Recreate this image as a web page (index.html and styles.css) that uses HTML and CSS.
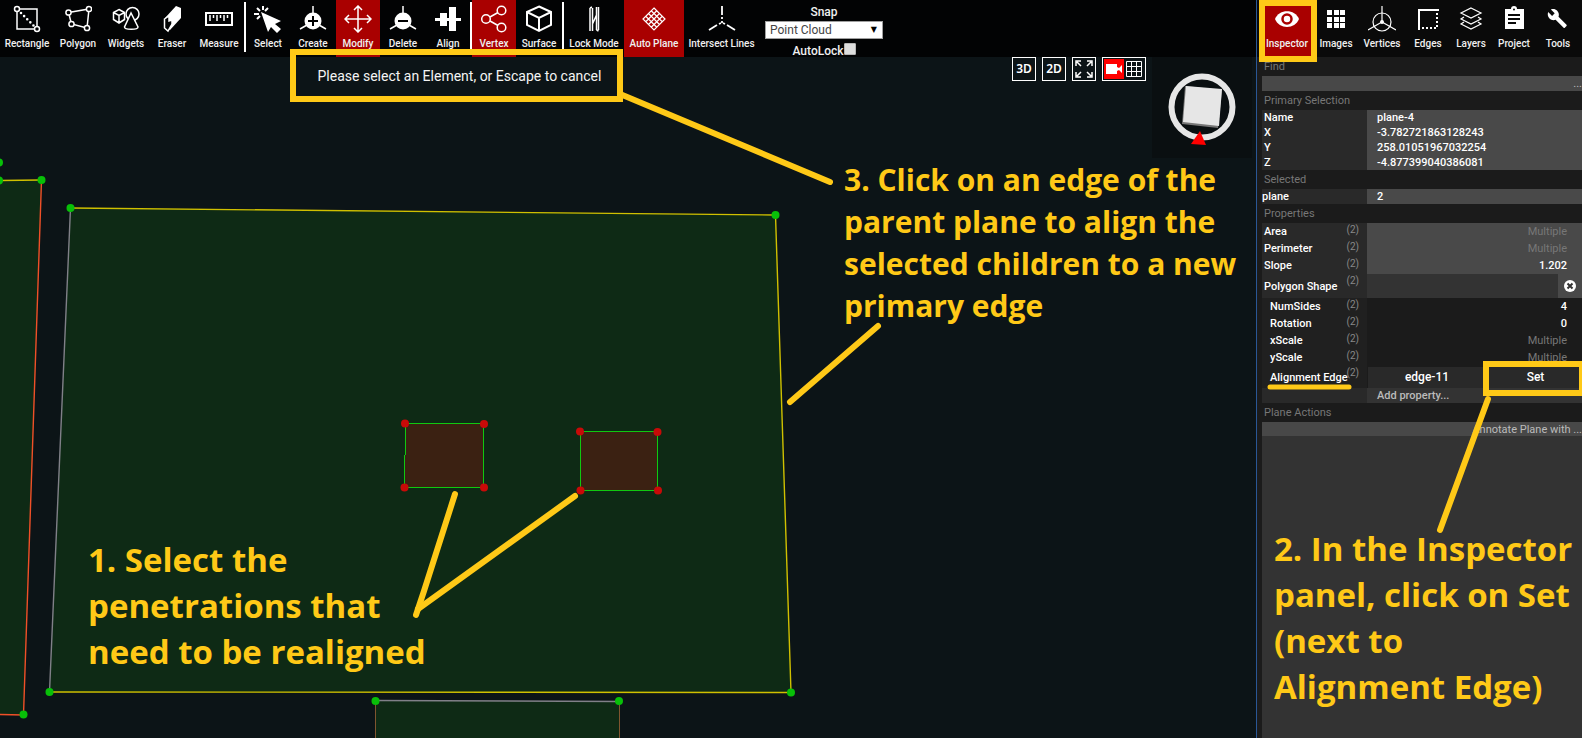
FILE: index.html
```html
<!DOCTYPE html>
<html lang="en">
<head>
<meta charset="utf-8">
<title>Plane editor</title>
<link rel="stylesheet" href="styles.css">
</head>
<body>
<div class="app">
  <main class="workspace">
    <header class="toolbar">
      <button class="tool tool-xl"><svg class="icon" viewBox="0 0 28 28"><path d="M4 4h20v20H4z"/><path d="M8 8l13 13" stroke-width="2.6" stroke-dasharray="0 4.4" stroke-linecap="round"/><circle class="solid-bg" cx="4" cy="4" r="2.5"/><circle class="solid-bg" cx="24" cy="24" r="2.5"/></svg><span>Rectangle</span></button>
      <button class="tool tool-lg"><svg class="icon" viewBox="0 0 28 28"><path d="M4.500 7.500L25 4L23 23L7.500 19z"/><circle class="solid-bg" cx="4.500" cy="7.500" r="2.600"/><circle class="solid-bg" cx="25" cy="4" r="2.600"/><circle class="solid-bg" cx="23" cy="23" r="2.600"/><circle class="solid-bg" cx="7.500" cy="19" r="2.600"/></svg><span>Polygon</span></button>
      <button class="tool tool-lg"><svg class="icon" viewBox="0 0 28 28"><circle cx="20.500" cy="9" r="6.500"/><path d="M7 4.500l5.500 3v7L7 18l-5.500-3.500v-7zM1.500 7.500L7 10.500l5.500-3M7 10.500V18"/><path class="solid-bg" d="M19 8l-6.500 14c0 3 13.500 3 13.500 0z"/></svg><span>Widgets</span></button>
      <button class="tool"><svg class="icon" viewBox="0 0 28 28"><path class="fill" d="M18 1l5 2v10L12 25l-5-4v-8z"/><path class="solid-bg" d="M6.500 14l4.500-3v5l3-1v4l-4 7-3.500-3z"/></svg><span>Eraser</span></button>
      <button class="tool tool-measure"><svg class="icon" viewBox="0 0 28 28"><path d="M1 8h26v12H1z" stroke-width="2"/><path d="M5 10v6M8.500 10v3M12 10v6M15.500 10v3M19 10v6M22.500 10v3"/></svg><span>Measure</span></button>
      <i class="divider"></i>
      <button class="tool"><svg class="icon" viewBox="0 0 28 28"><path class="fill" d="M7 7l20 9-6 3 6 5-4 4-6-6-3 5z"/><path d="M9 1v4M3 3l3 3M0 9h5M3 14l3-3M14 3l-3 3" stroke-width="2"/></svg><span>Select</span></button>
      <button class="tool tool-md"><svg class="icon" viewBox="0 0 28 28"><path d="M14 1v7M1 24l7-4M27 24l-7-4"/><circle class="fill" cx="14" cy="16" r="8.500"/><path class="dark" d="M9 16h10M14 11v10"/></svg><span>Create</span></button>
      <button class="tool active"><svg class="icon" viewBox="0 0 28 28"><path d="M14 2v24M2 14h24M10 5l4-4 4 4M10 23l4 4 4-4M5 10l-4 4 4 4M23 10l4 4-4 4"/></svg><span>Modify</span></button>
      <button class="tool tool-md"><svg class="icon" viewBox="0 0 28 28"><path d="M14 1v7M1 24l7-4M27 24l-7-4"/><circle class="fill" cx="14" cy="16" r="8.500"/><path class="dark" d="M9 16h10"/></svg><span>Delete</span></button>
      <button class="tool"><svg class="icon" viewBox="0 0 28 28"><path class="fill" d="M1 13h26v3H1zM6 8h7v13H6zM15 2h7v24h-7z"/></svg><span>Align</span></button>
      <i class="divider"></i>
      <button class="tool active"><svg class="icon" viewBox="0 0 28 28"><circle cx="6" cy="14" r="4.300"/><circle cx="21.500" cy="5.500" r="4.300"/><circle cx="21.500" cy="22.500" r="4.300"/><path d="M10 12l8-4.500M10 16l8 4.500"/></svg><span>Vertex</span></button>
      <button class="tool tool-md"><svg class="icon" viewBox="0 0 28 28"><path d="M14 1.500L26 7v13l-12 6L2 20V7zM2 7l12 6 12-6M14 13v13" stroke-width="2"/></svg><span>Surface</span></button>
      <i class="divider"></i>
      <button class="tool tool-wide"><svg class="icon" viewBox="0 0 28 28"><path d="M10 26V3M12.500 26V3M10 3l2-1M16.500 25V2M18.500 25V2M12.500 19l4-9M16.500 25l2 1"/></svg><span>Lock Mode</span></button>
      <button class="tool tool-wide active"><svg class="icon" viewBox="0 0 28 28"><path d="M14 3l11 11-11 11L3 14zM16.750 5.750l-11 11M19.500 8.500l-11 11M22.250 11.250l-11 11M11.250 5.750l11 11M8.500 8.500l11 11M5.750 11.250l11 11" stroke-width="1.200"/></svg><span>Auto Plane</span></button>
      <button class="tool tool-wider"><svg class="icon" viewBox="0 0 28 28"><path d="M14 1v9M14 12v2M1 25l8-5M27 25l-8-5M11 19l2-1M17 19l-2-1M14 16v2" stroke-width="1.800"/></svg><span>Intersect Lines</span></button>
      <div class="snap">
        <label for="snap-mode">Snap</label>
        <div class="snap-select"><select id="snap-mode"><option>Point Cloud</option></select><span class="caret">▼</span></div>
        <div class="snap-lock"><label for="auto-lock">AutoLock</label><input type="checkbox" id="auto-lock"></div>
      </div>
    </header>

    <section class="viewport">
      <svg class="scene">
        <path class="plane" d="M0 123.500L41.500 123L23.500 657.500L0 657z"/>
        <path class="plane" d="M70.500 151L775.500 158L791 635.500L49.500 635z"/>
        <path class="plane" d="M375.500 644H619.500V760H375.500z"/>
        <g class="edges">
          <path class="edge-yellow" d="M0 123.500L41.500 123M70.500 151L775.500 158L791 635.500L49.500 635"/>
          <path class="edge-orange" d="M41.500 123L23.500 658L0 657.500"/>
          <path class="edge-grey" d="M70.500 151L49.500 635M375.500 643.500L619.500 644.500"/>
          <path class="edge-brown" d="M375.500 644V760M619.500 644V760"/>
        </g>
        <path class="opening" d="M405.500 366.500H483.500V430.500H404.500z"/>
        <path class="opening" d="M580.500 374.500H657.500V433.500H580.500z"/>
        <g class="vertex">
          <circle cx="-1" cy="105.500" r="4"/><circle cx="-1" cy="123.500" r="4"/><circle cx="41.500" cy="123" r="4"/><circle cx="23.500" cy="657.500" r="4"/>
          <circle cx="70.500" cy="151" r="4"/><circle cx="775.500" cy="158" r="4"/><circle cx="791" cy="635.500" r="4"/><circle cx="49.500" cy="635" r="4"/>
          <circle cx="375.500" cy="644" r="4"/><circle cx="619" cy="644" r="4"/>
        </g>
        <g class="vertex-selected">
          <circle cx="405" cy="366.500" r="4"/><circle cx="484" cy="367" r="4"/><circle cx="484" cy="430.500" r="4"/><circle cx="404.500" cy="430.500" r="4"/>
          <circle cx="580" cy="374.500" r="4"/><circle cx="657.500" cy="375" r="4"/><circle cx="658" cy="433.500" r="4"/><circle cx="580.500" cy="433.500" r="4"/>
        </g>
        <g class="marks">
          <path d="M455 437L424 534L416 558"/><path d="M575 439L418 552"/><path d="M620 37L830 125"/><path d="M878 269L790 345"/>
        </g>
      </svg>
      <p class="message">Please select an Element, or Escape to cancel</p>
      <div class="view-tools">
        <button class="view-btn">3D</button>
        <button class="view-btn">2D</button>
        <button class="view-btn" aria-label="Fit view"><svg viewBox="0 0 22 22"><path d="M8 8L4 4M3 8V3h5M14 8l4-4M14 3h5v5M8 14l-4 4M3 14v5h5M14 14l4 4M19 14v5h-5"/></svg></button>
        <button class="view-btn view-pair" aria-label="Camera and grid"><svg class="camera" viewBox="0 0 20 20"><path class="fill" d="M2 5h11v3l2 1 3-3v8l-3-3-2 1v3H2z"/></svg><svg class="grid" viewBox="0 0 20 20"><path d="M2.500 2.500h15v15h-15zM2.500 7.500h15M2.500 12.500h15M7.500 2.500v15M12.500 2.500v15"/></svg></button>
        <svg class="compass" viewBox="0 0 100 101"><circle cx="50" cy="50" r="30.500"/><path class="cube-side" d="M33 29l-3 38 36 4 4-38z"/><path class="cube" d="M34 29l36 3-3 37-36-4z"/><path class="north" d="M48 74l-9 13 15 1z"/></svg>
      </div>
      <p class="note note-1">1. Select the<br>penetrations that<br>need to be realigned</p>
      <p class="note note-3">3. Click on an edge of the<br>parent plane to align the<br>selected children to a new<br>primary edge</p>
    </section>
  </main>

  <aside class="panel">
    <nav class="tabs">
      <button class="tool tool-xl active"><svg class="icon" viewBox="0 0 28 28"><path class="fill" d="M2 14C6 3.500 22 3.500 26 14C22 24.500 6 24.500 2 14z"/><circle class="eye-ring" cx="14" cy="14" r="4.500"/></svg><span>Inspector</span></button>
      <button class="tool"><svg class="icon" viewBox="0 0 28 28"><path class="fill" d="M5 5h5v5H5zM12 5h5v5h-5zM18 5h5v5h-5zM5 12h5v5H5zM12 12h5v5h-5zM18 12h5v5h-5zM5 18h5v5H5zM12 18h5v5h-5zM18 18h5v5h-5z"/></svg><span>Images</span></button>
      <button class="tool tool-lg"><svg class="icon" viewBox="0 0 28 28"><circle cx="14" cy="17" r="9" stroke-width="1.200"/><path d="M14 1v16L0 25M14 17l14 8" stroke-width="1.200"/><circle class="fill" cx="14" cy="17" r="2"/></svg><span>Vertices</span></button>
      <button class="tool"><svg class="icon" viewBox="0 0 28 28"><path d="M5 25V5h20" stroke-width="2"/><path d="M23 8v16M8 23h15" stroke-width="2" stroke-dasharray="2 2"/></svg><span>Edges</span></button>
      <button class="tool tool-sm"><svg class="icon" viewBox="0 0 28 28"><path d="M14 3l10 5-10 5L4 8zM7 12l-3 2 10 5 10-5-3-2M7 17l-3 2 10 5 10-5-3-2" stroke-width="1.200"/></svg><span>Layers</span></button>
      <button class="tool"><svg class="icon" viewBox="0 0 28 28"><path class="fill" fill-rule="evenodd" d="M5 4h6a3 3 0 0 1 6 0h7v20H5zM8 9v2h12V9zM8 13v2h12v-2zM8 17v2h8v-2zM14 3.500a1 1 0 0 0 0 2 1 1 0 0 0 0-2z"/></svg><span>Project</span></button>
      <button class="tool"><svg class="icon" viewBox="0 0 28 28"><path class="fill" d="M22.500 19.800l-8-8c.8-2 .4-4.400-1.300-6.100C11.500 4 9 3.600 6.900 4.500l3.800 3.800-2.600 2.600-3.900-3.800c-.9 2.100-.5 4.600 1.300 6.400 1.700 1.700 4 2.100 6.100 1.300l8 8c.3.300.9.300 1.200 0l1.700-1.700c.4-.4.400-1 0-1.300z"/></svg><span>Tools</span></button>
    </nav>
    <div class="inspector">
      <h2><label for="find">Find</label></h2>
      <div class="find"><input id="find" type="text"><button class="more">...</button></div>
      <h2>Primary Selection</h2>
      <table class="plain">
        <tr><th>Name</th><td>plane-4</td></tr>
        <tr><th>X</th><td>-3.782721863128243</td></tr>
        <tr><th>Y</th><td>258.01051967032254</td></tr>
        <tr><th>Z</th><td>-4.877399040386081</td></tr>
      </table>
      <h2>Selected</h2>
      <table class="plain flush"><tr><th>plane</th><td>2</td></tr></table>
      <h2>Properties</h2>
      <table class="props">
        <tr><th>Area<sup>(2)</sup></th><td class="mixed">Multiple</td></tr>
        <tr><th>Perimeter<sup>(2)</sup></th><td class="mixed">Multiple</td></tr>
        <tr><th>Slope<sup>(2)</sup></th><td>1.202</td></tr>
        <tr class="shape"><th>Polygon Shape<sup>(2)</sup></th><td><button class="clear" aria-label="Clear shape"><svg viewBox="0 0 12 12"><circle cx="6" cy="6" r="6"/><path d="M3.500 3.500l5 5M8.500 3.500l-5 5"/></svg></button></td></tr>
        <tr class="sub"><th>NumSides<sup>(2)</sup></th><td>4</td></tr>
        <tr class="sub"><th>Rotation<sup>(2)</sup></th><td>0</td></tr>
        <tr class="sub"><th>xScale<sup>(2)</sup></th><td class="mixed">Multiple</td></tr>
        <tr class="sub"><th>yScale<sup>(2)</sup></th><td class="mixed">Multiple</td></tr>
        <tr class="sub align"><th>Alignment Edge<sup>(2)</sup></th><td><div class="pair"><button>edge-11</button><button>Set</button></div></td></tr>
        <tr class="add"><th></th><td><button>Add property...</button></td></tr>
      </table>
      <h2>Plane Actions</h2>
      <button class="annotate">Annotate Plane with ...</button>
    </div>
    <div class="rest"></div>
    <svg class="panel-marks marks">
      <path d="M6 3H58V59H6z"/>
      <path d="M230 364H326V393H230z"/>
      <path class="thin" d="M14 387H93"/>
      <path d="M232 399L184 530"/>
    </svg>
    <p class="note note-2">2. In the Inspector<br>panel, click on Set<br>(next to<br>Alignment Edge)</p>
  </aside>
</div>
</body>
</html>
```
FILE: styles.css
```css
* { box-sizing: border-box; }
body, p, h2 { margin: 0; }
body { background: #0c1417; color: #fff; font-family: Roboto, sans-serif; font-size: 11px; }
button, input, select { font: inherit; color: inherit; padding: 0; border: 0; margin: 0; background: none; }

.app { display: grid; grid-template-columns: 1fr 326px; min-height: 100vh; overflow: hidden; }
.workspace { display: flex; flex-direction: column; min-width: 0; }

/* Toolbars */
.toolbar, .tabs { display: flex; height: 57px; flex: none; }
.toolbar { background: #020304; }
.tool { width: 44px; flex: none; display: flex; flex-direction: column; align-items: center; padding-top: 5px; gap: 4px; font-size: 10px; font-weight: 500; line-height: 14px; white-space: nowrap; color: #f0f0f0; }
.tool-sm { width: 42px; }
.tool-md { width: 46px; }
.tool-lg { width: 48px; }
.tool-measure { width: 50px; }
.tool-xl { width: 54px; }
.tool-wide { width: 60px; }
.tool-wider { width: 75px; }
.active { background: #a90000; }
.divider { width: 2px; height: 50px; margin-top: 2px; background: #fff; flex: none; }
.icon { width: 28px; height: 28px; fill: none; stroke: #fff; stroke-width: 1.5; flex: none; }
.icon .fill { fill: #fff; stroke: none; }
.icon .solid-bg { fill: #020304; }
.icon .dark { stroke: #000; stroke-width: 2; }
.icon .eye-ring { stroke: #a90000; stroke-width: 2.5; }
.snap { display: flex; flex-direction: column; align-items: center; width: 118px; margin-left: 6px; font-size: 12px; font-weight: 500; line-height: 14px; padding-top: 5px; color: #f0f0f0; }
.snap-select { position: relative; width: 100%; margin-top: 2px; }
.snap-select select { appearance: none; display: block; width: 100%; height: 18px; padding-left: 4px; border: 1px solid #a0a0a0; background: #fff; color: #444; font-size: 12px; font-weight: 400; line-height: 16px; }
.caret { position: absolute; right: 6px; top: 2px; color: #000; font: 8px/14px "DejaVu Sans", sans-serif; }
.snap-lock { display: flex; margin-top: 4px; height: 14px; }
.snap-lock label { padding-top: 1px; }
.snap-lock input { appearance: none; width: 12px; height: 12px; background: #ddd; border: 1px solid #b5b5b5; border-radius: 1px; }

/* Drawing area */
.viewport { position: relative; flex: 1; background: #0c1417; }
.scene { position: absolute; inset: 0; width: 100%; height: 100%; fill: none; }
.plane { fill: #0e2a15; }
.edges { stroke-width: 1.4; }
.edge-yellow { stroke: #d0c000; }
.edge-orange { stroke: #f05028; }
.edge-grey { stroke: #808088; }
.edge-brown { stroke: #80552f; stroke-width: 1; }
.opening { fill: #3b2112; stroke: #10c810; shape-rendering: crispEdges; }
.vertex { fill: #08c008; }
.vertex-selected { fill: #c80a08; }
.marks { fill: none; stroke: #ffc917; stroke-width: 6; stroke-linecap: round; }
.message { position: absolute; left: 290px; top: -8px; width: 333px; border: 6px solid #ffc917; padding: 13px 0 12px 6px; text-align: center; font-size: 14px; line-height: 16px; color: #f4f4f4; }
.view-tools { position: absolute; right: 4px; top: 0; display: flex; align-items: flex-start; gap: 6px; }
.view-btn { width: 24px; height: 24px; border: 1px solid #fff; display: flex; align-items: center; justify-content: center; font: 600 12px/22px "Noto Sans", sans-serif; }
.view-btn svg { width: 22px; height: 22px; fill: none; stroke: #fff; stroke-width: 1.5; }
.view-pair { width: 44px; }
.view-btn .camera, .view-btn .grid { width: 20px; height: 20px; }
.view-btn .grid { stroke-width: 1; }
.camera { background: #f00; }
.view-btn .camera .fill { fill: #fff; stroke: none; }
.compass { width: 100px; height: 101px; background: #0a0f11; fill: none; stroke: #e6e6e6; stroke-width: 6; }
.compass .cube { fill: #e6e6e6; stroke: none; }
.compass .cube-side { fill: #777; stroke: none; }
.compass .north { fill: #f00; stroke: none; }

/* Tutorial notes */
.note { position: absolute; color: #ffc917; font-family: "Open Sans", sans-serif; font-weight: 700; white-space: nowrap; }
.note-1 { left: 88px; top: 480px; font-size: 33px; line-height: 46px; }
.note-2 { left: 17px; top: 526px; font-size: 33px; line-height: 46px; }
.note-3 { left: 844px; top: 102px; font-size: 30px; line-height: 42px; }

/* Inspector */
.panel { position: relative; display: flex; flex-direction: column; background: #1b1b1b; border-left: 1px solid #2a5796; }
.tabs { background: #0a0a0a; padding-left: 3px; }
.inspector { padding-left: 5px; }
.inspector h2 { height: 19px; padding-left: 2px; font-size: 11px; font-weight: 400; line-height: 19px; color: #777; }
.find { display: flex; height: 15px; background: #484848; }
.find input { flex: 1; min-width: 0; }
.more { color: #bbb; line-height: 15px; }
.inspector table { width: 100%; border-collapse: collapse; table-layout: fixed; font-weight: 500; }
.inspector th { width: 105px; padding: 0 0 0 2px; background: #292929; text-align: left; font-weight: 500; white-space: nowrap; position: relative; }
.inspector td { padding: 0 0 0 10px; background: #494949; }
.plain tr { height: 15px; line-height: 15px; }
.inspector .flush th { padding-left: 0; }
.props tr { height: 17px; line-height: 17px; }
.inspector .props td { padding: 0 15px 0 0; text-align: right; }
.props sup { position: absolute; right: 8px; top: 0; font-size: 10px; font-weight: 400; line-height: 14px; color: #888; }
.inspector .mixed { color: #777; font-weight: 400; }
.props .shape { height: 24px; }
.inspector .props .shape td { padding: 0; background: #333; }
.clear { display: flex; width: 24px; height: 24px; margin-left: auto; background: #494949; align-items: center; justify-content: center; }
.clear svg { width: 12px; height: 12px; fill: #fff; stroke: #333; stroke-width: 2; }
.clear circle { stroke: none; }
.inspector .sub th { padding-left: 8px; background: #202020; }
.inspector .sub td { background: #1b1b1b; }
.props .align { height: 22px; }
.inspector .props .align td { padding: 0 0 0 1px; }
.pair { display: grid; grid-template-columns: 118px 1fr; gap: 1px; }
.pair button { height: 21px; background: #292929; font-size: 12px; }
.pair button:last-child { padding-left: 2px; }
.props .add { height: 15px; line-height: 15px; }
.inspector .props .add td { padding: 0 0 0 10px; background: #333; text-align: left; color: #bbb; }
.inspector .add td button { display: block; height: 15px; line-height: 15px; }
.annotate { display: block; width: 100%; height: 14px; background: #484848; color: #bbb; font-weight: 400; text-align: right; line-height: 13px; }
.rest { flex: 1; margin-left: 5px; background: #333; }
.panel-marks { position: absolute; inset: 0 0 0 -1px; width: 326px; height: 100%; pointer-events: none; }
.panel-marks .thin { stroke-width: 5; }
```
